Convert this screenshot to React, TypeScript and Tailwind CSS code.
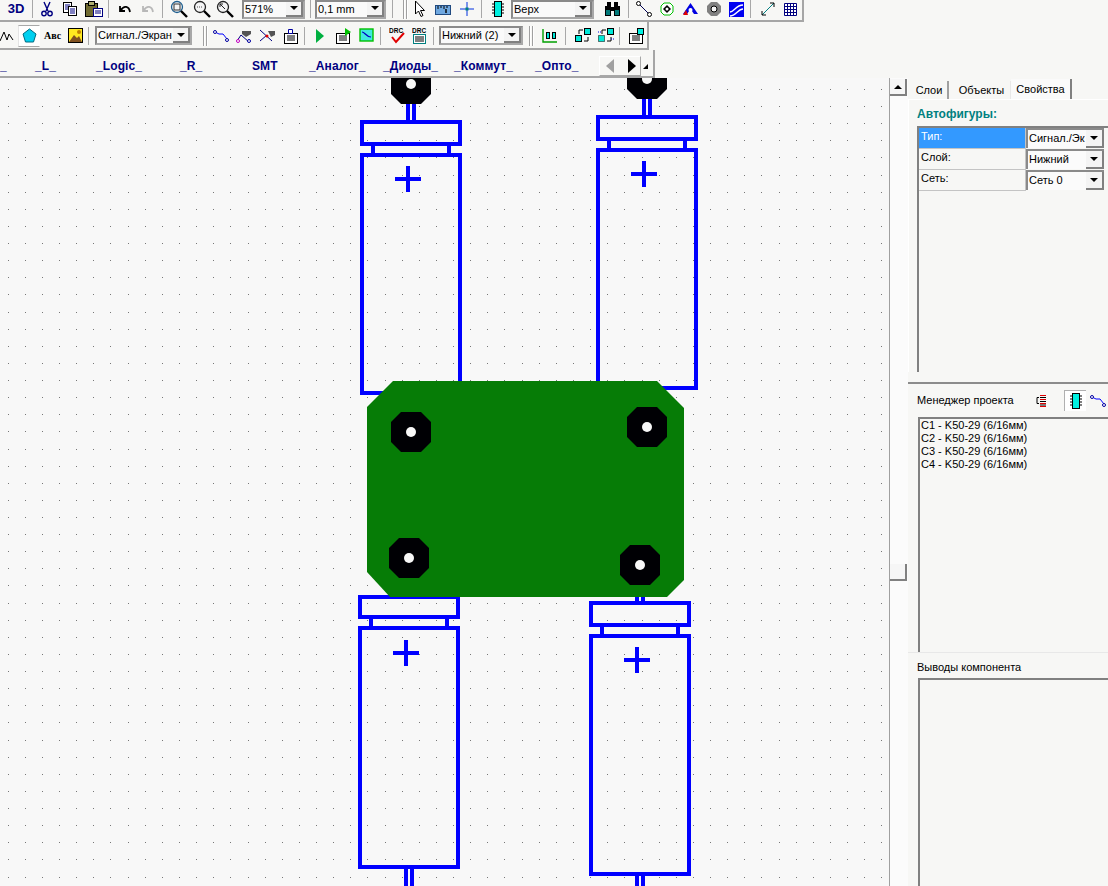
import type { ReactNode } from "react";

const BLUE = "#0000ff";

// grid dots of the board canvas
const dots: { x: number; y: number }[] = [];
for (let i = 0; i < 52; i++) {
  for (let j = 0; j < 48; j++) {
    dots.push({ x: Math.round(7.7 + i * 17.13), y: Math.round(89 + j * 17.12) });
  }
}

function octagon(cx: number, cy: number) {
  const r = 20;
  const c = 10;
  return [
    [cx - r + c, cy - r],
    [cx + r - c, cy - r],
    [cx + r, cy - r + c],
    [cx + r, cy + r - c],
    [cx + r - c, cy + r],
    [cx - r + c, cy + r],
    [cx - r, cy + r - c],
    [cx - r, cy - r + c],
  ]
    .map((p) => p.join(","))
    .join(" ");
}

interface CapProps {
  left: number;
  right: number;
  top: number;
  flange: number;
  bodyTop: number;
  bottom: number;
  neckA: number;
  neckB: number;
  plusX: number;
  plusY: number;
}

function Capacitor({ left, right, top, flange, bodyTop, bottom, neckA, neckB, plusX, plusY }: CapProps) {
  return (
    <g fill="none" stroke={BLUE} strokeWidth={4} shapeRendering="crispEdges">
      <rect x={left} y={top} width={right - left} height={flange - top} />
      <rect x={left} y={bodyTop} width={right - left} height={bottom - bodyTop} />
      <line x1={neckA} y1={flange} x2={neckA} y2={bodyTop} />
      <line x1={neckB} y1={flange} x2={neckB} y2={bodyTop} />
      <line x1={plusX - 13} y1={plusY} x2={plusX + 13} y2={plusY} />
      <line x1={plusX} y1={plusY - 13} x2={plusX} y2={plusY + 13} />
    </g>
  );
}

function Leads({ a, b, y1, y2 }: { a: number; b: number; y1: number; y2: number }) {
  return (
    <g stroke={BLUE} strokeWidth={4} shapeRendering="crispEdges">
      <line x1={a} y1={y1} x2={a} y2={y2} />
      <line x1={b} y1={y1} x2={b} y2={y2} />
    </g>
  );
}

function Pad({ x, y }: { x: number; y: number }) {
  return (
    <g>
      <polygon points={octagon(x, y)} fill="#000004" />
      <circle cx={x} cy={y} r={5} fill="#f8f8f8" />
    </g>
  );
}

function Board() {
  return (
    <svg className="block h-[808px] w-[888px]" viewBox="0 78 888 808">
      {dots.map((d) => (
        <rect key={d.x + "-" + d.y} x={d.x} y={d.y} width={1} height={1} fill="#777777" />
      ))}
      <Leads a={408} b={414} y1={100} y2={122} />
      <Leads a={644} b={650} y1={95} y2={117} />
      <Leads a={637} b={643} y1={590} y2={603} />
      <Leads a={406} b={412} y1={865} y2={890} />
      <Leads a={637} b={643} y1={872} y2={890} />
      <Capacitor left={362} right={460} top={122} flange={144} bodyTop={155} bottom={393} neckA={373} neckB={449} plusX={408} plusY={179} />
      <Capacitor left={598} right={696} top={117} flange={139} bodyTop={150} bottom={388} neckA={609} neckB={685} plusX={644} plusY={174} />
      <Capacitor left={360} right={458} top={597} flange={617} bodyTop={628} bottom={867} neckA={371} neckB={447} plusX={406} plusY={653} />
      <Capacitor left={591} right={689} top={603} flange={625} bodyTop={636} bottom={874} neckA={602} neckB={678} plusX={637} plusY={660} />
      <polygon
        points="393,381 657,381 684,408 684,580 667,597 390,597 367,572 367,407"
        fill="#067c06"
      />
      <Pad x={411} y={84} />
      <Pad x={647} y={79} />
      <Pad x={411} y={432} />
      <Pad x={647} y={427} />
      <Pad x={409} y={558} />
      <Pad x={640} y={565} />
    </svg>
  );
}

function Ico({ children, w = 16, h = 16 }: { children: ReactNode; w?: number; h?: number }) {
  return (
    <svg width={w} height={h} viewBox={`0 0 ${w} ${h}`} className="block shrink-0">
      {children}
    </svg>
  );
}

function Tool({ children, className = "w-[23px]" }: { children: ReactNode; className?: string }) {
  return <div className={"flex h-full shrink-0 items-center justify-center " + className}>{children}</div>;
}

function Sep({ className = "" }: { className?: string }) {
  return <div className={"h-[18px] w-[2px] shrink-0 border-l border-[#a8a8a8] border-r-white " + className} />;
}

function Grip({ className = "" }: { className?: string }) {
  return (
    <div className={"flex h-[20px] w-[5px] shrink-0 justify-between " + className}>
      <div className="w-[2px] border-l border-[#a0a0a0] bg-white" />
      <div className="w-[2px] border-l border-[#a0a0a0] bg-white" />
    </div>
  );
}

function Arrow() {
  return <div className="h-0 w-0 border-x-[4px] border-t-[4px] border-x-transparent border-t-black" />;
}

function ArrowBtn({ className = "w-[17px]" }: { className?: string }) {
  return (
    <div className={"flex h-full shrink-0 items-center justify-center border-b-2 border-r-2 border-b-[#808080] border-r-[#808080] bg-[#f4f4f4] " + className}>
      <Arrow />
    </div>
  );
}

function Select({ text, className }: { text: string; className: string }) {
  return (
    <div className={"flex h-[19px] shrink-0 items-stretch border-2 border-[#8a8a8a] border-b-[#a8a8a8] border-r-[#a8a8a8] bg-[#fafafa] " + className}>
      <span className="flex-1 overflow-hidden whitespace-nowrap pl-[1px] leading-[15px] text-black">{text}</span>
      <ArrowBtn />
    </div>
  );
}

const Scissors = () => (
  <Ico>
    <path d="M5 1 L9 10 M11 1 L7 10" stroke="#000080" strokeWidth="1.4" fill="none" />
    <circle cx="5" cy="12.5" r="2.2" fill="none" stroke="#000080" strokeWidth="1.4" />
    <circle cx="11" cy="12.5" r="2.2" fill="none" stroke="#000080" strokeWidth="1.4" />
  </Ico>
);
const Copy = () => (
  <Ico>
    <rect x="1.5" y="1.5" width="8" height="10" fill="#fff" stroke="#000" />
    <rect x="6.5" y="5.5" width="8" height="9" fill="#fff" stroke="#000" />
    <path d="M3 4h5M3 6h3M3 8h3M8 8h5M8 10h5M8 12h5" stroke="#000080" />
  </Ico>
);
const Paste = () => (
  <Ico w={18}>
    <rect x="0.5" y="2.5" width="12" height="13" fill="#6f6a30" stroke="#000" />
    <rect x="3.5" y="0.5" width="6" height="4" fill="#b0b070" stroke="#000" />
    <rect x="8.5" y="7.5" width="9" height="8" fill="#fff" stroke="#000080" />
    <path d="M10 10h6M10 12h6" stroke="#000080" />
  </Ico>
);
const Undo = ({ color = "#000" }: { color?: string }) => (
  <Ico w={14} h={12}>
    <path d="M2 3 V8 H7 M3 7 C6 2 11 3 12 9" fill="none" stroke={color} strokeWidth="1.8" />
  </Ico>
);
const Zoom = ({ kind }: { kind: number }) => (
  <Ico w={18} h={18}>
    <circle cx="7" cy="7" r="5.5" fill="#f4f4f4" stroke={kind === 0 ? "#1f5f8f" : "#222"} strokeWidth="1.3" />
    {kind === 0 && <rect x="4" y="4" width="6" height="6" fill="none" stroke="#333" />}
    {kind === 1 && <path d="M4 7h6" stroke="#555" strokeDasharray="1 1" />}
    {kind === 2 && <path d="M4 4l5 5M4 4h3M4 4v3" stroke="#222" fill="none" />}
    <path d="M11 11l6 6" stroke="#000" strokeWidth="2.4" />
  </Ico>
);
const Cursor = () => (
  <Ico w={12} h={18}>
    <path d="M1.5 1 V14 L4.5 11 L7 16.5 L9 15.5 L6.5 10.5 H10.5 Z" fill="#fff" stroke="#000" />
  </Ico>
);
const Ruler = () => (
  <Ico w={16} h={12}>
    <rect x="0.5" y="2.5" width="15" height="9" fill="#6fa8e0" stroke="#204a80" />
    <path d="M3 3v3M6 3v2M9 3v3M12 3v2" stroke="#000" />
    <path d="M11 6v4" stroke="#000" strokeWidth="1.4" />
  </Ico>
);
const Cross = () => (
  <Ico w={14} h={14}>
    <path d="M0 7h14M7 0v14" stroke="#0030e0" />
    <rect x="5.5" y="5.5" width="3" height="3" fill="#008080" />
  </Ico>
);
const Chip = () => (
  <Ico w={12} h={16}>
    <rect x="2.5" y="0.5" width="7" height="15" fill="#00f0e0" stroke="#000" />
    <path d="M0 3h2M0 6h2M0 9h2M0 12h2M10 3h2M10 6h2M10 9h2M10 12h2" stroke="#000" strokeWidth="1.2" />
  </Ico>
);
const Binoculars = () => (
  <Ico w={17} h={14}>
    <rect x="3" y="0" width="4" height="5" fill="#000" />
    <rect x="10" y="0" width="4" height="5" fill="#000" />
    <rect x="1" y="4" width="6" height="10" fill="#000" />
    <rect x="10" y="4" width="6" height="10" fill="#000" />
    <rect x="7" y="5" width="3" height="4" fill="#000" />
    <rect x="2" y="8" width="4" height="5" fill="#007878" />
    <rect x="11" y="8" width="4" height="5" fill="#007878" />
  </Ico>
);
const Trace = () => (
  <Ico w={16} h={16}>
    <path d="M2 2 L14 14" stroke="#000050" />
    <circle cx="2.5" cy="2.5" r="2" fill="#fff" stroke="#000" />
    <circle cx="13.5" cy="13.5" r="2" fill="#fff" stroke="#000" />
  </Ico>
);
const Via = () => (
  <Ico w={14} h={14}>
    <polygon points="4,1 10,1 13,4 13,10 10,13 4,13 1,10 1,4" fill="#fff" stroke="#00c000" />
    <polygon points="7,3 11,7 7,11 3,7" fill="#000" />
    <circle cx="7" cy="7" r="1.5" fill="#fff" />
  </Ico>
);
const Poly = () => (
  <Ico w={15} h={13}>
    <path d="M7.5 0 L15 11 H11 L7.5 6 L4 11 H0 Z" fill="#0000e0" />
    <path d="M3 7 L0 12 H5 Z" fill="#e00000" />
    <circle cx="7.5" cy="7" r="2" fill="#fff" />
  </Ico>
);
const Hole = () => (
  <Ico w={14} h={14}>
    <polygon points="4,0 10,0 14,4 14,10 10,14 4,14 0,10 0,4" fill="#808080" />
    <circle cx="7" cy="7" r="3" fill="#f4f4f4" stroke="#000" />
  </Ico>
);
const Plane = () => (
  <Ico w={15} h={15}>
    <rect width="15" height="15" fill="#0000f0" />
    <path d="M1 10 C5 10 7 3 14 3 M1 14 C7 14 9 7 14 7" stroke="#fff" strokeWidth="1.4" fill="none" />
  </Ico>
);
const Diag = () => (
  <Ico w={14} h={14}>
    <path d="M1 13 L13 1" stroke="#008080" />
    <path d="M13 1h-4M13 1v4" stroke="#000" />
    <path d="M1 13h4M1 13v-4" stroke="#000" />
  </Ico>
);
const GridIco = () => (
  <Ico w={13} h={13}>
    <path d="M.5.5h12v12H.5ZM.5 3.5h12M.5 6.5h12M.5 9.5h12M3.5.5v12M6.5.5v12M9.5.5v12" fill="#fff" stroke="#000080" />
  </Ico>
);
const Route = ({ w = 16 }: { w?: number }) => (
  <Ico w={w} h={12}>
    <path d="M2 2 L6 4 L10 4 L14 9" stroke={BLUE} fill="none" />
    <circle cx="2" cy="2" r="1.5" fill="#fff" stroke="#0000a0" />
    <circle cx="14" cy="10" r="1.5" fill="#fff" stroke="#0000a0" />
  </Ico>
);
const RouteB = () => (
  <Ico w={16} h={14}>
    <path d="M1 12 L5 6 L13 13" stroke="#000080" fill="none" />
    <path d="M6 2 H15 V5 L10 8 L6 5Z" fill="#555" />
    <circle cx="2" cy="12" r="1.5" fill="#fff" stroke="#c000c0" />
    <circle cx="13" cy="12" r="1.5" fill="#fff" stroke="#0000a0" />
  </Ico>
);
const RouteC = () => (
  <Ico w={17} h={14}>
    <path d="M1 1 L13 12 M1 12 L8 6" stroke="#000080" fill="none" />
    <path d="M9 2 h7 v4 l-4 2Z" fill="#555" />
    <circle cx="8" cy="7" r="1.5" fill="#e00000" />
  </Ico>
);
const Doc = ({ tag }: { tag?: string }) => (
  <Ico w={16} h={16}>
    <rect x="1.5" y="5.5" width="13" height="10" fill="#fff" stroke="#000" />
    <path d="M4 8h8M4 10h8M4 12h8" stroke="#000" />
    {tag === "play" && <path d="M10 0 L16 4 L10 8Z" fill="#00c000" />}
    {tag === "chip" && <rect x="9.5" y="0.5" width="6" height="6" fill="#00f0e0" stroke="#000" />}
    {tag === "clip" && <path d="M5.5 1.5h4v4h-4Z" fill="#fff" stroke="#0000a0" />}
  </Ico>
);
const Ratsnest = () => (
  <Ico w={15} h={15}>
    <rect x="1" y="1" width="13" height="12" fill="#40e8e0" stroke="#00c000" strokeWidth="1.4" />
    <path d="M3 4 C6 4 7 9 12 9" stroke="#0000c0" fill="none" strokeWidth="1.2" />
  </Ico>
);
const Drc = ({ check }: { check: boolean }) => (
  <svg width={17} height={17} viewBox="0 0 17 17" className="block">
    <text x="0" y="6" fontSize="6.5" fontWeight="bold" fontFamily="Liberation Sans" fill="#000">
      DRC
    </text>
    {check ? (
      <path d="M3 10 L7 15 L15 6" stroke="#e00000" strokeWidth="2" fill="none" />
    ) : (
      <g>
        <rect x="1.5" y="7.5" width="12" height="9" fill="#fff" stroke="#008080" />
        <path d="M3 10h9M3 12h9M3 14h9" stroke="#000" />
      </g>
    )}
  </svg>
);
const ChipPair = ({ mode }: { mode: number }) => (
  <Ico w={18} h={17}>
    <rect x="1.5" y="8.5" width="6" height="6" fill="#00e8d8" stroke="#000" strokeDasharray={mode ? "1 1" : undefined} />
    <rect x="10.5" y="1.5" width="6" height="6" fill="#00e8d8" stroke="#000" />
    <path d="M5 7 V3 H9 M10 14 H14 V10" stroke="#000" fill="none" />
    {mode === 1 && <path d="M1 5h3M14 12h3" stroke="#0000e0" strokeDasharray="1 1" />}
  </Ico>
);
const Boards = () => (
  <Ico w={16} h={15}>
    <path d="M1 1 V14 H15" stroke="#00a000" fill="none" strokeWidth="1.4" />
    <rect x="4.5" y="4.5" width="3" height="6" fill="#00e8d8" stroke="#000" />
    <rect x="10.5" y="4.5" width="3" height="6" fill="#00e8d8" stroke="#000" />
  </Ico>
);
const Net = () => (
  <Ico w={10} h={13}>
    <path d="M4 1.5h6M4 5.5h6M4 9.5h6M4 12.5h6" stroke="#e00000" />
    <path d="M4 3.5h6M4 7.5h6M4 11h6" stroke="#000" />
    <path d="M3 3.5 H1 V9.5 H3" stroke="#000" fill="none" />
  </Ico>
);

const libraries: { name: string; className: string }[] = [
  { name: "_", className: "w-[35px]" },
  { name: "_L_", className: "w-[61px]" },
  { name: "_Logic_", className: "w-[84px]" },
  { name: "_R_", className: "w-[72px]" },
  { name: "SMT", className: "w-[57px]" },
  { name: "_Аналог_", className: "w-[74px]" },
  { name: "_Диоды_", className: "w-[71px]" },
  { name: "_Коммут_", className: "w-[81px]" },
  { name: "_Опто_", className: "w-[64px]" },
];

const parts = ["C1 - K50-29 (6/16мм)", "C2 - K50-29 (6/16мм)", "C3 - K50-29 (6/16мм)", "C4 - K50-29 (6/16мм)"];
const props = [
  { label: "Тип:", value: "Сигнал./Эк", active: true },
  { label: "Слой:", value: "Нижний", active: false },
  { label: "Сеть:", value: "Сеть 0", active: false },
];

export default function App() {
  return (
    <div className="flex h-[886px] w-[1108px] flex-col overflow-hidden bg-[#f7f7f5] font-['Liberation_Sans',sans-serif] text-[11px] text-black">
      {/* toolbars */}
      <div className="flex h-[78px] shrink-0 flex-col items-start">
        <div className="flex h-[22px] w-[804px] items-center border-b-2 border-r-2 border-[#a6a6a6] pb-[2px]">
          <Tool className="w-[32px]">
            <span className="text-[13px] font-bold text-[#000080]">3D</span>
          </Tool>
          <Sep />
          <Tool className="ml-[1px] w-[23px]"><Scissors /></Tool>
          <Tool><Copy /></Tool>
          <Tool className="ml-[1px] w-[23px]"><Paste /></Tool>
          <Sep className="ml-[3px]" />
          <Tool className="ml-[3px] w-[23px]"><Undo /></Tool>
          <Tool><Undo color="#b8b8b8" /></Tool>
          <Sep className="ml-[3px]" />
          <Tool className="ml-[3px] w-[23px]"><Zoom kind={0} /></Tool>
          <Tool><Zoom kind={1} /></Tool>
          <Tool><Zoom kind={2} /></Tool>
          <Select text="571%" className="ml-[6px] w-[63px]" />
          <Sep className="ml-[5px]" />
          <Select text="0,1 mm" className="ml-[3px] w-[71px]" />
          <Sep className="ml-[6px]" />
          <Grip className="ml-[9px]" />
          <Tool className="ml-[1px] w-[22px]"><Cursor /></Tool>
          <Tool className="w-[24px]"><Ruler /></Tool>
          <Tool className="w-[23px]"><Cross /></Tool>
          <Sep className="ml-[3px]" />
          <Tool className="ml-[3px] w-[23px]"><Chip /></Tool>
          <Select text="Верх" className="ml-[2px] w-[83px]" />
          <Tool className="ml-[6px] w-[24px]"><Binoculars /></Tool>
          <Sep className="ml-[4px]" />
          <Tool className="ml-[2px] w-[23px]"><Trace /></Tool>
          <Tool className="w-[24px]"><Via /></Tool>
          <Tool className="w-[23px]"><Poly /></Tool>
          <Tool className="w-[23px]"><Hole /></Tool>
          <Tool className="w-[23px]"><Plane /></Tool>
          <Sep className="ml-[2px]" />
          <Tool className="ml-[4px] w-[23px]"><Diag /></Tool>
          <Tool><GridIco /></Tool>
        </div>
        <div className="flex h-[28px] w-[649px] items-center border-b-2 border-r-2 border-[#a6a6a6] pt-[1px]">
          <Tool className="w-[14px]">
            <Ico w={14} h={12}>
              <path d="M0 11 L4 2 L7 10 L9 4 L13 10" stroke="#000" fill="none" />
            </Ico>
          </Tool>
          <div className="ml-[4px] flex h-[22px] w-[22px] shrink-0 items-center justify-center border border-b-[#a8a8a8] border-l-[#e4e4e4] border-r-white border-t-[#a8a8a8] bg-white">
            <Ico w={15} h={15}>
              <polygon points="7.5,1 14,6 11.5,14 3.5,14 1,6" fill="#00d0f0" stroke="#006a80" />
            </Ico>
          </div>
          <Tool className="w-[25px]">
            <span className="font-['Liberation_Serif',serif] text-[10px] font-bold">Авс</span>
          </Tool>
          <Tool className="w-[20px]">
            <Ico w={15} h={15}>
              <rect x="0.5" y="0.5" width="14" height="14" fill="#ffe820" stroke="#000" />
              <path d="M1 14 L6 7 L9 10 L11 8 L14 14Z" fill="#805020" />
              <circle cx="11" cy="4" r="2" fill="#c08000" />
            </Ico>
          </Tool>
          <Sep className="ml-[3px]" />
          <Select text="Сигнал./Экран" className="ml-[5px] w-[97px]" />
          <Grip className="ml-[11px]" />
          <Tool className="ml-[1px] w-[23px]"><Route /></Tool>
          <Tool><RouteB /></Tool>
          <Tool className="w-[24px]"><RouteC /></Tool>
          <Tool className="w-[23px]"><Doc tag="clip" /></Tool>
          <Sep className="ml-[2px]" />
          <Tool className="ml-[2px] w-[23px]">
            <Ico w={10} h={16}>
              <path d="M1 1 L9 8 L1 15Z" fill="#00b040" />
            </Ico>
          </Tool>
          <Tool><Doc tag="play" /></Tool>
          <Tool className="w-[24px]"><Ratsnest /></Tool>
          <Sep className="ml-[2px]" />
          <Tool className="ml-[4px] w-[23px]"><Drc check /></Tool>
          <Tool className="w-[22px]"><Drc check={false} /></Tool>
          <Sep className="ml-[2px]" />
          <Select text="Нижний (2)" className="ml-[4px] w-[84px]" />
          <Grip className="ml-[6px]" />
          <Tool className="ml-[3px] w-[25px]"><Boards /></Tool>
          <Sep className="ml-[3px]" />
          <Tool className="ml-[5px] w-[22px]"><ChipPair mode={0} /></Tool>
          <Tool><ChipPair mode={1} /></Tool>
          <Sep className="ml-[2px]" />
          <Tool className="ml-[3px] w-[23px]"><Doc tag="chip" /></Tool>
        </div>
        <div className="flex h-[28px] w-[655px] items-center border-b-2 border-r-2 border-[#a6a6a6] pt-[5px]">
          {libraries.map((lib) => (
            <div key={lib.name} className={"shrink-0 text-[12px] font-bold tracking-[0.1px] text-[#000080] " + lib.className}>
              {lib.name}
            </div>
          ))}
          <div className="flex h-[20px] w-[42px] shrink-0 items-center border border-[#a8a8a8] border-l-white border-t-white">
            <div className="ml-[6px] h-0 w-0 border-y-[7px] border-r-[8px] border-y-transparent border-r-[#a0a0a0]" />
            <div className="ml-[14px] h-0 w-0 border-y-[7px] border-l-[8px] border-y-transparent border-l-black" />
          </div>
          <div className="ml-[2px] mt-[1px] h-0 w-0 border-b-[5px] border-l-[5px] border-b-black border-l-transparent" />
        </div>
      </div>

      <div className="flex min-h-0 flex-1">
        {/* canvas */}
        <div className="h-[808px] w-[890px] shrink-0 overflow-hidden border-r border-[#a0a0a0] bg-[#f8f8f8]">
          <Board />
        </div>

        {/* vertical scrollbar */}
        <div className="flex h-full w-[18px] shrink-0 flex-col items-start bg-[#fbfbfb] pt-[1px]">
          <div className="flex h-[17px] w-[17px] items-center justify-center border-b-2 border-r-2 border-[#808080] bg-[#f6f6f6]">
            <div className="h-0 w-0 border-x-[4px] border-b-[4px] border-x-transparent border-b-black" />
          </div>
          <div className="mt-[468px] h-[17px] w-[17px] border-b-2 border-r-2 border-[#808080] bg-[#f6f6f6]" />
        </div>

        {/* right panel */}
        <div className="flex h-full min-w-0 flex-1 flex-col">
          <div className="h-[306px] shrink-0 border-b-2 border-[#8c8c8c]">
            <div className="flex h-[21px] items-end pl-[3px]">
              <div className="flex h-[18px] w-[38px] items-center justify-center border-r-2 border-[#a0a0a0]">Слои</div>
              <div className="flex h-[18px] w-[62px] items-center justify-center border-r border-[#e8e8e8] pl-[4px]">Объекты</div>
              <div className="flex h-[20px] w-[61px] items-start justify-center border-r-2 border-[#808080] bg-[#fafafa] pt-[2px]">Свойства</div>
            </div>
            <div className="border-l border-t border-white pl-[8px] pt-[7px]">
              <div className="text-[12px] font-bold leading-[15px] text-[#008080]">Автофигуры:</div>
              <div className="mt-[4px] h-[246px] border-l-2 border-t-2 border-[#808080]">
                {props.map((row) => (
                  <div key={row.label} className="flex h-[21px]">
                    <div
                      className={
                        "w-[107px] shrink-0 border-b border-r border-[#c4c4c4] pl-[2px] leading-[17px] " +
                        (row.active ? "bg-[#3399ff] text-white" : "")
                      }
                    >
                      {row.label}
                    </div>
                    <div className="flex h-[20px] w-[78px] shrink-0 items-stretch border-l-2 border-t-2 border-[#8a8a8a] bg-[#fbfbfb]">
                      <span className="flex-1 overflow-hidden whitespace-nowrap pl-[1px] leading-[17px]">{row.value}</span>
                      <ArrowBtn className="w-[18px]" />
                    </div>
                  </div>
                ))}
              </div>
            </div>
          </div>

          <div className="flex h-[33px] shrink-0 items-center pl-[9px]">
            <span className="w-[119px] shrink-0">Менеджер проекта</span>
            <Net />
            <div className="ml-[18px] flex h-[21px] w-[22px] shrink-0 items-center justify-center border-l border-t border-[#b0b0b0] bg-white">
              <Chip />
            </div>
            <div className="ml-[4px]"><Route /></div>
          </div>
          <div className="ml-[10px] h-[235px] shrink-0 border-l-2 border-t-2 border-[#808080] pl-[1px]">
            {parts.map((p) => (
              <div key={p} className="h-[13px] leading-[13px]">{p}</div>
            ))}
          </div>

          <div className="flex h-[26px] shrink-0 items-center border-t border-[#e8e8e8] pl-[9px] pt-[3px]">Выводы компонента</div>
          <div className="ml-[10px] flex-1 border-l-2 border-t-2 border-[#808080]" />
        </div>
      </div>
    </div>
  );
}
